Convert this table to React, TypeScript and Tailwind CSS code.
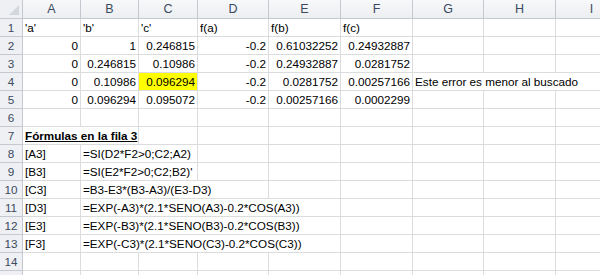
// Hoja de cálculo: método de la falsa posición, estilo Excel 2010
const FONT = "font-['Liberation_Sans',Arial,sans-serif] text-[11.7px]"

// ancho de cada columna (incluye el borde derecho): encabezado de filas, A..I
const widths = [23, 58, 58, 59, 71, 72, 72, 71, 72, 72]
const letters = ['A', 'B', 'C', 'D', 'E', 'F', 'G', 'H', 'I']

type Cell = {
  text?: string
  span?: number
  align?: 'left' | 'right'
  bold?: boolean
  underline?: boolean
  yellow?: boolean
}

const num = (t: string, extra: Partial<Cell> = {}): Cell => ({ text: t, align: 'right', ...extra })
const txt = (t: string, span = 1, extra: Partial<Cell> = {}): Cell => ({ text: t, span, align: 'left', ...extra })
const empty = (n: number): Cell[] => Array.from({ length: n }, () => ({}))

const rows: Cell[][] = [
  [txt("'a'"), txt("'b'"), txt("'c'"), txt('f(a)'), txt('f(b)'), txt('f(c)'), ...empty(3)],
  [num('0'), num('1'), num('0.246815'), num('-0.2'), num('0.61032252'), num('0.24932887'), ...empty(3)],
  [num('0'), num('0.246815'), num('0.10986'), num('-0.2'), num('0.24932887'), num('0.0281752'), ...empty(3)],
  [
    num('0'),
    num('0.10986'),
    num('0.096294', { yellow: true }),
    num('-0.2'),
    num('0.0281752'),
    num('0.00257166'),
    txt('Este error es menor al buscado', 3),
  ],
  [num('0'), num('0.096294'), num('0.095072'), num('-0.2'), num('0.00257166'), num('0.0002299'), ...empty(3)],
  empty(9),
  [txt('Fórmulas en la fila 3', 2, { bold: true, underline: true }), ...empty(7)],
  [txt('[A3]'), txt('=SI(D2*F2>0;C2;A2)', 2), ...empty(6)],
  [txt('[B3]'), txt("=SI(E2*F2>0;C2;B2)'", 2), ...empty(6)],
  [txt('[C3]'), txt('=B3-E3*(B3-A3)/(E3-D3)', 3), ...empty(5)],
  [txt('[D3]'), txt('=EXP(-A3)*(2.1*SENO(A3)-0.2*COS(A3))', 4), ...empty(4)],
  [txt('[E3]'), txt('=EXP(-B3)*(2.1*SENO(B3)-0.2*COS(B3))', 4), ...empty(4)],
  [txt('[F3]'), txt('=EXP(-C3)*(2.1*SENO(C3)-0.2*COS(C3))', 4), ...empty(4)],
  empty(9),
  empty(9),
]

function Row({ n, cells, hideNumber }: { n: number; cells: Cell[]; hideNumber?: boolean }) {
  let col = 1
  return (
    <div className="flex h-[18px] w-max shrink-0">
      {/* número de fila */}
      <div
        className="flex shrink-0 items-center justify-center border-r border-b border-[#c5c9cf] bg-[#eef0f3] text-[#3b4a5e]"
        style={{ width: widths[0] }}
      >
        {hideNumber ? '' : n}
      </div>
      {cells.map((c, i) => {
        const span = c.span ?? 1
        const w = widths.slice(col, col + span).reduce((a, b) => a + b, 0)
        col += span
        return (
          <div
            key={i}
            className={`flex shrink-0 items-center overflow-visible whitespace-nowrap border-r border-b border-[#dadcdd] px-[2px] text-black ${
              c.align === 'right' ? 'justify-end' : 'justify-start'
            } ${c.yellow ? 'bg-[#ffff00]' : 'bg-white'} ${c.bold ? 'font-bold' : ''} ${c.underline ? 'underline' : ''}`}
            style={{ width: w }}
          >
            {c.text}
          </div>
        )
      })}
    </div>
  )
}

export default function App() {
  return (
    <div className={`h-[275px] w-[600px] overflow-hidden bg-white ${FONT}`}>
      {/* encabezado de columnas */}
      <div className="flex h-[19px] w-max shrink-0">
        <div
          className="relative shrink-0 border-r border-b border-[#c5c9cf] bg-[#eef0f3]"
          style={{ width: widths[0] }}
        >
          <svg className="absolute right-[3px] bottom-[3px]" width="10" height="10" viewBox="0 0 10 10">
            <polygon points="10,0 10,10 0,10" fill="#d3d6db" />
          </svg>
        </div>
        {letters.map((l, i) => (
          <div
            key={l}
            className="flex shrink-0 items-center justify-center border-r border-b border-[#c5c9cf] bg-gradient-to-b from-[#f7f8f9] to-[#eceef1] text-[12.5px] text-[#3b4a5e]"
            style={{ width: widths[i + 1] }}
          >
            {l}
          </div>
        ))}
      </div>

      {rows.map((cells, i) => (
        <Row key={i} n={i + 1} cells={cells} hideNumber={i === rows.length - 1} />
      ))}
    </div>
  )
}
